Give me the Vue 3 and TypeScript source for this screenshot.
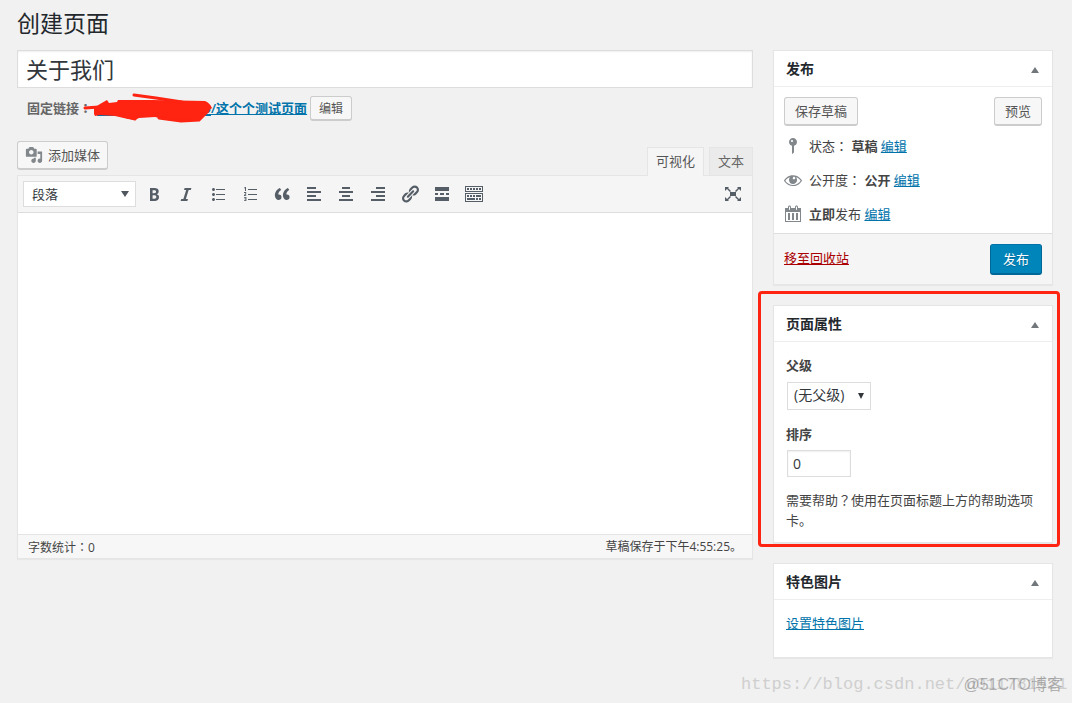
<script setup lang="ts">
import { ref } from 'vue'

interface Tool {
  label: string
  path: string
}

const tools: Tool[] = [
  {
    label: '粗体',
    path: 'M6 4v13h4.54c1.37 0 2.46-.33 3.26-1 .8-.66 1.2-1.58 1.2-2.77 0-.84-.17-1.51-.51-2.01s-.9-.85-1.67-1.03v-.09c.57-.1 1.02-.4 1.36-.9s.51-1.13.51-1.91c0-1.14-.39-1.98-1.17-2.5C12.75 4.26 11.5 4 9.78 4H6zm2.57 5.15V6.26h1.36c.73 0 1.27.11 1.61.32.34.22.51.58.51 1.07 0 .54-.16.92-.47 1.15s-.82.35-1.51.35h-1.5zm0 2.19h1.6c1.44 0 2.16.53 2.16 1.61 0 .6-.17 1.05-.51 1.34s-.86.43-1.57.43H8.57v-3.38z',
  },
  { label: '斜体', path: 'M14.78 6h-2.13l-2.8 9h2.12l-.62 2H4.6l.62-2h2.14l2.8-9H8.03l.62-2h6.75z' },
  {
    label: '项目符号列表',
    path: 'M5.5 7C4.67 7 4 6.33 4 5.5 4 4.68 4.67 4 5.5 4 6.32 4 7 4.68 7 5.5 7 6.33 6.32 7 5.5 7zM8 5h9v1H8V5zm-2.5 7c-.83 0-1.5-.67-1.5-1.5C4 9.68 4.67 9 5.5 9c.82 0 1.5.68 1.5 1.5 0 .83-.68 1.5-1.5 1.5zM8 10h9v1H8v-1zm-2.5 7c-.83 0-1.5-.67-1.5-1.5 0-.82.67-1.5 1.5-1.5.82 0 1.5.68 1.5 1.5 0 .83-.68 1.5-1.5 1.5zM8 15h9v1H8v-1z',
  },
  {
    label: '编号列表',
    path: 'M8 5h9v1H8zM8 10h9v1H8zM8 15h9v1H8zM5 3h1v4H5V4.2l-.8.4v-.9zM4 8h2.2v2.3L5 11.2h1.3v.8H4v-1.1l1.4-1.1v-.9H4zM4 13h2.4v4H4v-.8h1.5v-.9H4.4v-.7h1.1v-.8H4z',
  },
  {
    label: '引用',
    path: 'M9.49 13.22c0-.74-.2-1.38-.61-1.9-.62-.78-1.83-.88-2.53-.72-.29-1.65 1.11-3.75 2.92-4.65L7.88 4c-2.73 1.3-5.42 4.28-4.96 8.05C3.21 14.43 4.59 16 6.54 16c.85 0 1.56-.25 2.12-.75s.83-1.18.83-2.03zm8.05 0c0-.74-.2-1.38-.61-1.9-.63-.78-1.83-.88-2.53-.72-.29-1.65 1.11-3.75 2.92-4.65L15.93 4c-2.73 1.3-5.41 4.28-4.95 8.05.29 2.38 1.66 3.95 3.61 3.95.85 0 1.56-.25 2.12-.75s.83-1.18.83-2.03z',
  },
  { label: '左对齐', path: 'M12 5V3H3v2h9zm5 4V7H3v2h14zm-5 4v-2H3v2h9zm5 4v-2H3v2h14z' },
  { label: '居中对齐', path: 'M14 5V3H6v2h8zm3 4V7H3v2h14zm-3 4v-2H6v2h8zm3 4v-2H3v2h14z' },
  { label: '右对齐', path: 'M17 5V3H8v2h9zm0 4V7H3v2h14zm0 4v-2H8v2h9zm0 4v-2H3v2h14z' },
  {
    label: '插入链接',
    path: 'M17.74 2.76c1.68 1.69 1.68 4.41 0 6.1l-1.53 1.52c-1.12 1.12-2.7 1.47-4.14 1.09l2.62-2.61.76-.77.76-.76c.84-.84.84-2.2 0-3.04-.84-.85-2.2-.85-3.04 0l-.77.76-3.38 3.38c-.37-1.44-.02-3.02 1.1-4.14l1.52-1.53c1.69-1.68 4.42-1.68 6.1 0zM8.59 13.43l5.34-5.34c.42-.42.42-1.1 0-1.52-.44-.43-1.13-.39-1.53 0l-5.33 5.34c-.42.42-.42 1.1 0 1.52.44.43 1.13.39 1.52 0zm-.76 2.29l4.14-4.15c.38 1.44.03 3.02-1.09 4.14l-1.52 1.53c-1.69 1.68-4.41 1.68-6.1 0-1.68-1.68-1.68-4.42 0-6.1l1.53-1.52c1.12-1.12 2.7-1.47 4.14-1.1l-4.14 4.15c-.85.84-.85 2.2 0 3.05.84.84 2.2.84 3.04 0z',
  },
  { label: '插入“更多”标签', path: 'M17 7V3H3v4h14zM6 11V9H3v2h3zm6 0V9H8v2h4zm5 0V9h-3v2h3zm0 6v-4H3v4h14z' },
  {
    label: '工具栏开关',
    path: 'M19 2v6H1V2h18zm-1 5V3H2v4h16zM5 4v2H3V4h2zm3 0v2H6V4h2zm3 0v2H9V4h2zm3 0v2h-2V4h2zm3 0v2h-2V4h2zm2 5v9H1V9h18zm-1 8v-7H2v7h16zM5 11v2H3v-2h2zm3 0v2H6v-2h2zm3 0v2H9v-2h2zm6 0v2h-5v-2h5zm-6 3v2H3v-2h8zm3 0v2h-2v-2h2zm3 0v2h-2v-2h2z',
  },
]

const statusRows = [
  {
    key: 'status',
    label: '状态',
    strong: '草稿',
    after: ' ',
    path: 'M14 6c0 1.86-1.28 3.41-3 3.86V16c0 1-2 2-2 2V9.860c-1.72-.45-3-2-3-3.86 0-2.21 1.79-4 4-4s4 1.79 4 4zM8 5c0 .55.45 1 1 1s1-.45 1-1-.45-1-1-1-1 .45-1 1z',
  },
  {
    key: 'visibility',
    label: '公开度',
    strong: '公开',
    after: ' ',
    path: 'M18.3 9.5C15 4.9 8.5 3.8 3.9 7.2c-1.2.9-2.2 2.1-3 3.4.2.4.5.8.8 1.2 3.3 4.6 9.6 5.6 14.2 2.4.9-.7 1.7-1.4 2.4-2.4.3-.4.5-.8.8-1.2-.3-.4-.5-.8-.8-1.1zm-8.2-2.3c.5-.5 1.3-.5 1.8 0s.5 1.3 0 1.8-1.3.5-1.8 0-.5-1.3 0-1.8zm-.1 7.7c-3.1 0-6-1.6-7.7-4.2C3.5 9 5.1 7.8 7 7.2c-.7.8-1 1.7-1 2.7 0 2.2 1.7 4.1 4 4.1 2.2 0 4.1-1.7 4.1-4v-.1c0-1-.4-2-1.1-2.7 1.9.6 3.5 1.8 4.7 3.5-1.7 2.6-4.6 4.2-7.7 4.2z',
  },
  {
    key: 'date',
    label: '',
    strong: '立即',
    after: '发布 ',
    path: 'M15 4h3v14H2V4h3V3c0-.83.67-1.5 1.5-1.5S8 2.17 8 3v1h4V3c0-.83.67-1.5 1.5-1.5S15 2.17 15 3v1zM6 3v2.5c0 .28.22.5.5.5s.5-.22.5-.5V3c0-.28-.22-.5-.5-.5S6 2.72 6 3zm7 0v2.5c0 .28.22.5.5.5s.5-.22.5-.5V3c0-.28-.22-.5-.5-.5s-.5.22-.5.5zm4 14V8H3v9h14zM7 16V9H5v7h2zm4 0V9H9v7h2zm4 0V9h-2v7h2z',
  },
]

const title = ref('关于我们')
const content = ref('')
const order = ref('0')
</script>

<template>
  <div class="wrap" lang="zh-CN">
    <h1>创建页面</h1>
    <div class="columns">
      <main>
        <input v-model="title" class="title" type="text" aria-label="标题" />
        <div class="permalink">
          <span class="permalink-label">固定链接<span class="punct" lang="zh-TW">：</span></span>
          <a href="#" class="permalink-url"><span class="host">o</span>/这个个测试页面</a>
          <button type="button" class="btn small">编辑</button>
          <svg class="scribble" viewBox="0 0 132 32" aria-hidden="true">
            <path
              d="M11 16L17 12l7-4 2 3 8-1 1-2 35 0 52 1c3 1 5 3 7 7l-5 4-4 4-6 4-4 1-26-1-12-3-16 1-4 2-7-1-13-3-15-1-5 1-1-2z"
            />
            <path class="stroke" d="M2 16l14-1M51 3l22 3 26 4M15 21l10-1M34 22l18 5M76 26l22 3 18-1 9-9" />
          </svg>
        </div>

        <div class="editor-head">
          <button type="button" class="btn media">
            <svg viewBox="0 0 20 20" aria-hidden="true">
              <path
                d="M13 11V4c0-.55-.45-1-1-1h-1.67L9 1H5L3.67 3H2c-.55 0-1 .45-1 1v7c0 .55.45 1 1 1h10c.55 0 1-.45 1-1zM7 4.5c1.38 0 2.5 1.12 2.5 2.5S8.38 9.5 7 9.5 4.5 8.38 4.5 7 5.62 4.5 7 4.5zM14 6h5v10.5c0 1.38-1.12 2.5-2.5 2.5S14 17.88 14 16.5s1.12-2.5 2.5-2.5c.17 0 .34.02.5.05V9h-3V6zm-4 8.05V13h2v3.5c0 1.38-1.12 2.5-2.5 2.5S7 17.88 7 16.5 8.12 14 9.5 14c.17 0 .34.02.5.05z"
              />
            </svg>
            添加媒体
          </button>
          <div class="tabs">
            <button type="button" class="tab active">可视化</button>
            <button type="button" class="tab">文本</button>
          </div>
        </div>

        <div class="editor">
          <div class="toolbar">
            <span class="select-box format">
              <select aria-label="段落格式">
                <option>段落</option>
              </select>
              <svg viewBox="0 0 8 6" aria-hidden="true"><path d="M0 0h8L4 6z" /></svg>
            </span>
            <button v-for="tool in tools" :key="tool.label" type="button" class="tool" :aria-label="tool.label">
              <svg viewBox="0 0 20 20"><path :d="tool.path" /></svg>
            </button>
            <button type="button" class="tool full" aria-label="免打扰写作模式">
              <svg viewBox="0 0 20 20">
                <path
                  d="M7 8h6v4H7zM2 3h4L5 4l3 3-1 1-3-3-2 2zM18 3v4l-2-2-3 3-1-1 3-3-1-1zM2 17v-4l2 2 3-3 1 1-3 3 1 1zM18 17h-4l1-1-3-3 1-1 3 3 2-2z"
                />
              </svg>
            </button>
          </div>
          <textarea v-model="content" aria-label="正文"></textarea>
          <div class="status-bar">
            <span>字数统计<span class="punct" lang="zh-TW">：</span>0</span>
            <span>草稿保存于下午4:55:25。</span>
          </div>
        </div>
      </main>

      <aside>
        <section class="box">
          <header>
            <h2>发布</h2>
            <button type="button" class="toggle" aria-label="收起发布">
              <svg viewBox="0 0 8 6"><path d="M4 0l4 6H0z" /></svg>
            </button>
          </header>
          <div class="publish-actions">
            <button type="button" class="btn">保存草稿</button>
            <button type="button" class="btn">预览</button>
          </div>
          <ul class="status-list">
            <li v-for="row in statusRows" :key="row.key">
              <svg viewBox="0 0 20 20" aria-hidden="true"><path :d="row.path" /></svg>
              <span>
                <template v-if="row.label">{{ row.label }}<span class="punct" lang="zh-TW">：</span>{{ ' ' }}</template>
                <strong>{{ row.strong }}</strong>{{ row.after }}<a href="#">编辑</a>
              </span>
            </li>
          </ul>
          <footer>
            <a href="#" class="trash">移至回收站</a>
            <button type="button" class="btn primary">发布</button>
          </footer>
        </section>

        <section class="box highlighted">
          <header>
            <h2>页面属性</h2>
            <button type="button" class="toggle" aria-label="收起页面属性">
              <svg viewBox="0 0 8 6"><path d="M4 0l4 6H0z" /></svg>
            </button>
          </header>
          <div class="attributes">
            <label for="parent">父级</label>
            <span class="select-box parent">
              <select id="parent">
                <option>(无父级)</option>
              </select>
              <svg viewBox="0 0 6 6" aria-hidden="true"><path d="M0 0h6L3 6z" /></svg>
            </span>
            <label for="order">排序</label>
            <input id="order" v-model="order" type="text" />
            <p>需要帮助<span class="punct" lang="zh-TW">？</span>使用在页面标题上方的帮助选项卡。</p>
          </div>
        </section>

        <section class="box">
          <header>
            <h2>特色图片</h2>
            <button type="button" class="toggle" aria-label="收起特色图片">
              <svg viewBox="0 0 8 6"><path d="M4 0l4 6H0z" /></svg>
            </button>
          </header>
          <div class="featured"><a href="#">设置特色图片</a></div>
        </section>
      </aside>
    </div>
    <div class="watermark csdn">https://blog.csdn.net/u011781521</div>
    <div class="watermark cto">@51CTO博客</div>
  </div>
</template>

<style>
body {
  background: #f1f1f1;
  overflow: hidden;
}
</style>

<style scoped>
.wrap {
  position: relative;
  box-sizing: border-box;
  min-height: 100vh;
  padding: 0 19px 0 17px;
  color: #444;
  font-family: 'Open Sans', 'Noto Sans CJK SC', sans-serif;
  font-size: 13px;
  line-height: 20px;
}
.wrap *,
.wrap *::after {
  box-sizing: border-box;
}
button,
input,
select,
textarea {
  margin: 0;
  font: inherit;
  color: inherit;
}
svg {
  display: block;
  fill: currentColor;
}
a {
  color: #0073aa;
  text-decoration: underline;
}
.punct {
  font-family: 'Noto Sans CJK TC', sans-serif;
}
h1 {
  margin: 0 0 4px;
  color: #23282d;
  font-size: 23px;
  font-weight: 400;
  line-height: 46px;
}
.columns {
  display: grid;
  grid-template-columns: minmax(0, 1fr) 280px;
  gap: 20px;
  align-items: start;
}
.title {
  display: block;
  width: 100%;
  height: 38px;
  padding: 0 8px 2px;
  border: 1px solid #ddd;
  background: #fff;
  box-shadow: inset 0 1px 2px rgba(0, 0, 0, 0.07);
  color: #32373c;
  font-size: 22px;
}
.btn {
  height: 29px;
  padding: 0 10px;
  border: 1px solid #ccc;
  border-bottom-width: 2px;
  border-radius: 3px;
  background: #f7f7f7;
  color: #555;
  line-height: 26px;
  white-space: nowrap;
}
.btn.small {
  height: 25px;
  padding: 2px 8px 0;
  font-size: 12px;
  line-height: 20px;
}
.permalink {
  position: relative;
  display: flex;
  align-items: center;
  margin-top: 8px;
  padding-left: 10px;
}
.permalink-label {
  margin-bottom: 2px;
  color: #666;
  font-weight: 600;
}
.permalink-url {
  display: flex;
  margin: 0 3px 2px 5px;
  font-weight: 600;
}
.host {
  width: 114px;
  height: 18px;
  border-bottom: 1px solid #0073aa;
  text-align: right;
}
.scribble {
  position: absolute;
  left: 66px;
  top: -4px;
  width: 132px;
  height: 32px;
  color: #ff2312;
}
.stroke {
  fill: none;
  stroke: currentColor;
  stroke-width: 3;
  stroke-linecap: round;
}
.editor-head {
  display: flex;
  justify-content: space-between;
  height: 34px;
  margin-top: 20px;
}
.media {
  display: flex;
  align-items: center;
  gap: 5px;
  padding: 0 7px;
}
.media svg {
  width: 18px;
  height: 18px;
  color: #82878c;
}
.tabs {
  display: flex;
  align-items: flex-end;
  gap: 5px;
  z-index: 1;
}
.tab {
  height: 28px;
  padding: 0 8px 2px;
  border: 1px solid #e5e5e5;
  border-bottom: 0;
  background: #ebebeb;
  color: #666;
}
.tab.active {
  height: 29px;
  margin-bottom: -1px;
  padding-bottom: 3px;
  background: #f5f5f5;
  color: #555;
}
.editor {
  border: 1px solid #e5e5e5;
  background: #fff;
  box-shadow: 0 1px 1px rgba(0, 0, 0, 0.04);
}
.toolbar {
  display: flex;
  align-items: center;
  gap: 4px;
  height: 37px;
  padding: 0 5px;
  border-bottom: 1px solid #ddd;
  background: #f5f5f5;
}
.select-box {
  display: grid;
  align-items: center;
  border: 1px solid #ddd;
  background: #fff;
  color: #32373c;
}
.select-box > * {
  grid-area: 1 / 1;
}
.select-box select {
  width: 100%;
  height: 100%;
  border: 0;
  background: none;
  appearance: none;
}
.select-box svg {
  justify-self: end;
  margin-right: 6px;
  pointer-events: none;
}
.format {
  width: 113px;
  height: 26px;
}
.format select {
  padding: 0 8px;
}
.format svg {
  width: 8px;
  height: 6px;
  color: #50575e;
}
.tool {
  width: 28px;
  padding: 0 4px;
  border: 0;
  background: none;
  color: #555d66;
}
.tool svg {
  width: 20px;
  height: 20px;
}
.full {
  margin-left: auto;
}
textarea {
  display: block;
  width: 100%;
  height: 321px;
  padding: 10px;
  border: 0;
  outline: 0;
  resize: none;
}
.status-bar {
  display: flex;
  justify-content: space-between;
  padding: 2px 10px 0;
  border-top: 1px solid #e5e5e5;
  background: #f7f7f7;
  font-size: 12px;
}
aside {
  display: flex;
  flex-direction: column;
  gap: 20px;
}
.box {
  position: relative;
  border: 1px solid #e5e5e5;
  background: #fff;
  box-shadow: 0 1px 1px rgba(0, 0, 0, 0.04);
}
.box header {
  display: flex;
  align-items: center;
  justify-content: space-between;
  height: 36px;
  padding: 0 13px 0 12px;
  border-bottom: 1px solid #eee;
}
h2 {
  margin: 0;
  color: #23282d;
  font-size: 14px;
  font-weight: 600;
}
.toggle {
  padding: 2px 0 0;
  border: 0;
  background: none;
  color: #72777c;
}
.toggle svg {
  width: 8px;
  height: 6px;
}
.publish-actions {
  display: flex;
  justify-content: space-between;
  padding: 10px 10px 0;
}
.status-list {
  margin: 0;
  padding: 3px 10px 2px;
  list-style: none;
}
.status-list li {
  display: flex;
  align-items: center;
  gap: 6px;
  height: 34px;
}
.status-list svg {
  width: 20px;
  height: 20px;
  margin-left: -1px;
  color: #82878c;
}
.box footer {
  display: flex;
  align-items: center;
  justify-content: space-between;
  padding: 10px 10px 9px;
  border-top: 1px solid #ddd;
  background: #f5f5f5;
}
.trash {
  margin-bottom: 4px;
  color: #a00;
}
.primary {
  height: 31px;
  padding: 0 12px;
  border-color: #0073aa #006799 #006799;
  background: #0085ba;
  color: #fff;
  text-shadow: 0 1px 1px #006799;
}
.highlighted::after {
  content: '';
  position: absolute;
  inset: -15px -8px -5px -16px;
  border: 3px solid #ff2312;
  border-radius: 4px;
  pointer-events: none;
}
.attributes {
  padding: 13px 12px 12px;
}
.attributes label {
  display: block;
  font-weight: 600;
}
.parent {
  width: 84px;
  height: 28px;
  margin: 7px 1px 14px;
  font-size: 14px;
}
.parent select {
  padding: 0 6px 2px;
}
.parent svg {
  width: 6px;
  height: 6px;
}
#order {
  display: block;
  width: 64px;
  height: 27px;
  margin: 6px 1px 13px;
  padding: 0 5px;
  border: 1px solid #ddd;
  background: #fff;
  box-shadow: inset 0 1px 2px rgba(0, 0, 0, 0.07);
  color: #32373c;
  font-size: 14px;
}
.attributes p {
  margin: 0;
}
.featured {
  padding: 13px 12px 24px;
}
.watermark {
  position: absolute;
  bottom: 8px;
  white-space: nowrap;
  pointer-events: none;
}
.csdn {
  left: 741px;
  color: #cfcfcf;
  font-family: 'Liberation Mono', monospace;
  font-size: 17px;
}
.cto {
  right: 9px;
  color: rgba(120, 120, 120, 0.55);
  font-family: 'Liberation Sans', 'Noto Sans CJK SC', sans-serif;
  font-size: 16px;
}
</style>
